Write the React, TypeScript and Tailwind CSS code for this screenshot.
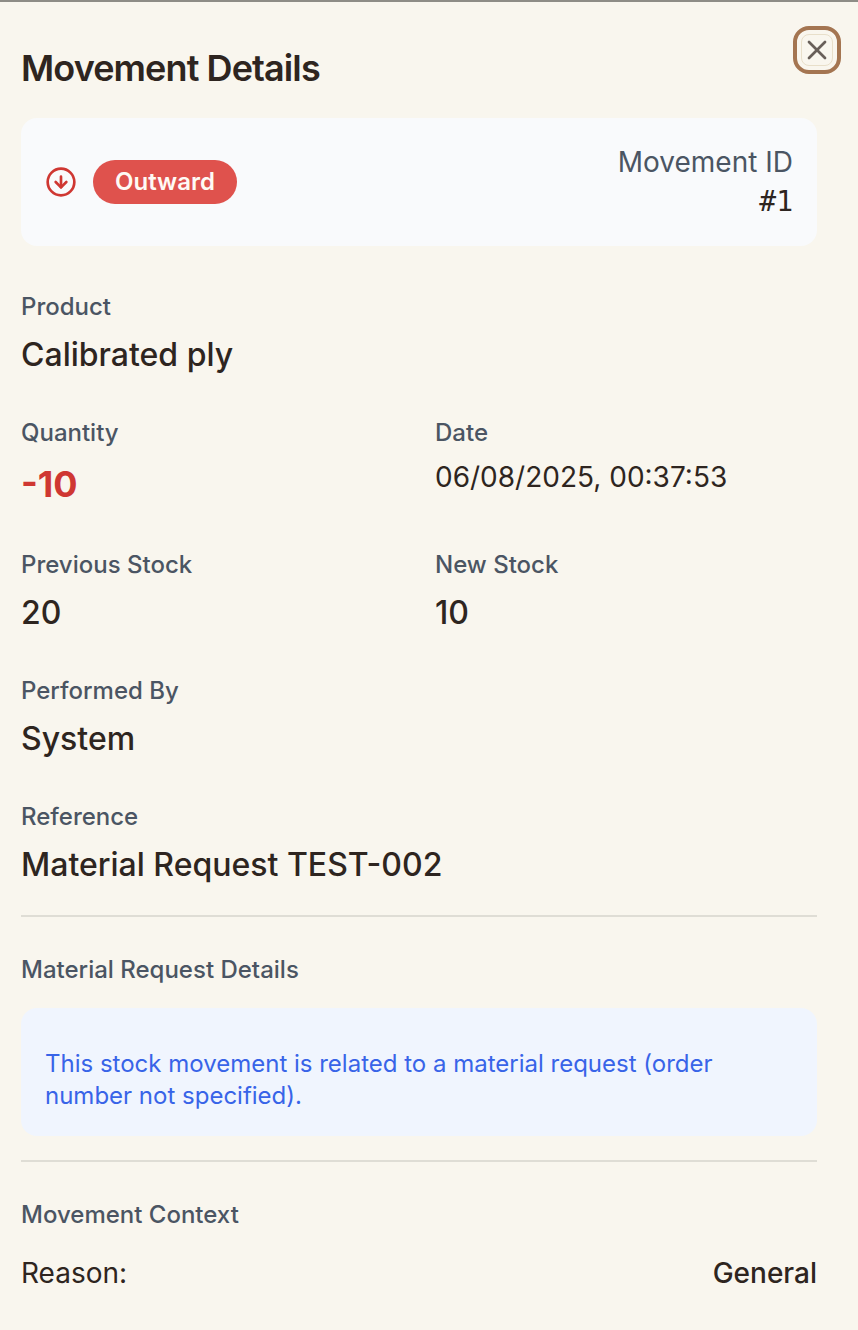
import type { ReactNode } from "react";
import { CircleArrowDown, X } from "lucide-react";

function Field({ label, className = "", children }: { label: string; className?: string; children: ReactNode }) {
  return (
    <div className={className}>
      <dt className="text-2xl leading-8 font-medium text-[#4b5563]">{label}</dt>
      {children}
    </div>
  );
}

const value = "mt-2 text-[32px] leading-12 font-medium";

export default function App() {
  return (
    <main
      role="dialog"
      aria-labelledby="title"
      className="relative min-h-screen border-t-2 border-[#8e8c86] bg-[#f9f6ee] pt-11 pr-[41px] pb-8 pl-[21px] font-['Inter',sans-serif] text-[#2e2520]"
    >
      <button
        aria-label="Close"
        className="absolute top-6 right-[17px] flex size-12 items-center justify-center rounded-2xl border-4 border-[#a47551] bg-[#f9f6ee] text-[#685f59]"
      >
        <span className="flex size-8 items-center justify-center rounded-lg border border-[#e8dfca]">
          <X size={32} strokeWidth={2} className="shrink-0" />
        </span>
      </button>
      <h1 id="title" className="text-4xl leading-[44px] font-semibold tracking-[-0.9px]">Movement Details</h1>

      <section className="mt-7 flex items-center justify-between rounded-2xl bg-[#f9fafc] p-6">
        <div className="flex items-center gap-4">
          <CircleArrowDown size={32} className="text-[#cf3732]" />
          <span className="rounded-full bg-[#df524d] px-[22px] py-1 text-2xl leading-9 font-semibold text-[#fefaf5]">Outward</span>
        </div>
        <div className="text-right text-[28px]">
          <p className="leading-10 text-[#4b5563]">Movement ID</p>
          <p className="font-['DejaVu_Sans_Mono',monospace] leading-10">#1</p>
        </div>
      </section>

      <dl className="mt-[45px] grid grid-cols-2 gap-x-8 gap-y-[38px]">
        <Field label="Product" className="col-span-2"><dd className={value}>Calibrated ply</dd></Field>
        <Field label="Quantity"><dd className="mt-2 text-4xl leading-[54px] font-bold text-[#cf3732]">-10</dd></Field>
        <Field label="Date"><dd className="mt-2 text-[28px] leading-10">06/08/2025, 00:37:53</dd></Field>
        <Field label="Previous Stock"><dd className={value}>20</dd></Field>
        <Field label="New Stock"><dd className={value}>10</dd></Field>
        <Field label="Performed By" className="col-span-2"><dd className={value}>System</dd></Field>
        <Field label="Reference" className="col-span-2"><dd className={value}>Material Request TEST-002</dd></Field>
      </dl>

      <section className="mt-[26px] border-t-2 border-[#dfddd5] pt-[37px]">
        <h2 className="text-2xl leading-8 font-medium text-[#4b5563]">Material Request Details</h2>
        <p className="mt-[22px] rounded-2xl bg-[#f0f5fe] px-6 pt-10 pb-6 text-2xl leading-8 text-[#3864e8]">
          This stock movement is related to a material request (order number not specified).
        </p>
      </section>

      <section className="mt-6 border-t-2 border-[#dfddd5] pt-[37px]">
        <h2 className="text-2xl leading-8 font-medium text-[#4b5563]">Movement Context</h2>
        <p className="mt-[22px] flex justify-between text-[28px] leading-10">
          <span>Reason:</span>
          <span className="font-medium">General</span>
        </p>
      </section>
    </main>
  );
}
